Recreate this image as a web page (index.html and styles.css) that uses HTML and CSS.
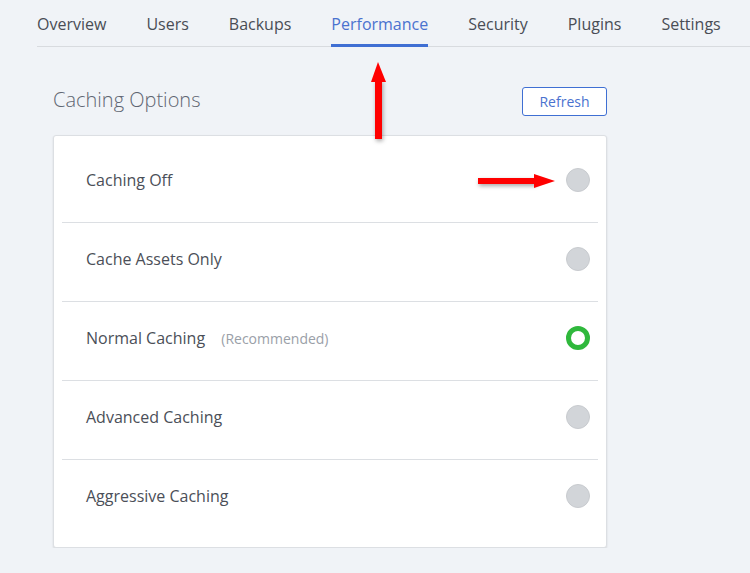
FILE: index.html
```html
<!DOCTYPE html>
<html lang="en">
<head>
    <meta charset="UTF-8">
    <meta name="viewport" content="width=device-width, initial-scale=1.0">
    <title>Performance</title>
    <link rel="stylesheet" href="styles.css">
</head>
<body>

    <nav class="tabs">
        <a class="tab">Overview</a>
        <a class="tab">Users</a>
        <a class="tab">Backups</a>
        <a class="tab active">Performance</a>
        <a class="tab">Security</a>
        <a class="tab">Plugins</a>
        <a class="tab">Settings</a>
    </nav>

    <section class="contenido">

        <div class="cabecera">
            <h2>Caching Options</h2>
            <button class="btnRefresh">Refresh</button>
        </div>

        <div class="tarjeta">
            <div class="opcion">
                <span class="nombre">Caching Off</span>
                <span class="radio"></span>
            </div>
            <div class="opcion">
                <span class="nombre">Cache Assets Only</span>
                <span class="radio"></span>
            </div>
            <div class="opcion">
                <span class="nombre">Normal Caching <small>(Recommended)</small></span>
                <span class="radio marcado"></span>
            </div>
            <div class="opcion">
                <span class="nombre">Advanced Caching</span>
                <span class="radio"></span>
            </div>
            <div class="opcion">
                <span class="nombre">Aggressive Caching</span>
                <span class="radio"></span>
            </div>
        </div>

    </section>

    <!-- flechas de anotacion -->
    <div class="flecha arriba"></div>
    <div class="flecha derecha"></div>

</body>
</html>
```

FILE: styles.css
```css
body{
    margin: 0;
    background-color: #f0f3f7;
    font-family: "Open Sans", "Noto Sans", sans-serif;
    color: #4b4f58;
}

.tabs{
    display: flex;
    gap: 40px;
    margin-left: 37px;
    height: 46px;
    border-bottom: 1px solid #d8dbdf;
}

.tab{
    display: block;
    height: 44px;
    line-height: 48px;
    font-size: 16px;
    color: #494d55;
    border-bottom: 3px solid transparent;
}

.tab.active{
    color: #4a72cf;
    border-bottom-color: #3f6fd3;
}

.contenido{
    width: 554px;
    margin-left: 53px;
}

.cabecera{
    display: flex;
    justify-content: space-between;
    align-items: center;
    margin-top: 40px;
    height: 29px;
    margin-bottom: 19px;
}

.cabecera h2{
    margin: 0;
    font-size: 20px;
    font-weight: 300;
    color: #5f6672;
    position: relative;
    top: -2px;
}

.btnRefresh{
    width: 85px;
    height: 29px;
    background: #ffffff;
    border: 1px solid #3f6fd3;
    border-radius: 3px;
    color: #4a72cf;
    font-family: "Open Sans", sans-serif;
    font-size: 14px;
    padding: 0;
}

.tarjeta{
    background: #ffffff;
    border: 1px solid #dcdfe3;
    border-radius: 3px;
    box-shadow: 0 1px 2px rgba(0, 0, 0, 0.12);
    padding: 8px 8px 9px 8px;
}

.opcion{
    display: flex;
    justify-content: space-between;
    align-items: center;
    padding: 24px 8px 30px 24px;
    border-bottom: 1px solid #dcdfe3;
}

.opcion:last-child{
    border-bottom: none;
}

.nombre{
    font-size: 16px;
    line-height: 22px;
    color: #4b4f58;
}

.nombre small{
    font-size: 14px;
    color: #9aa0a8;
    margin-left: 12px;
}

.radio{
    width: 24px;
    height: 24px;
    box-sizing: border-box;
    border-radius: 50%;
    background: #d2d5d9;
    border: 1px solid #c8cbcf;
}

.radio.marcado{
    background: #ffffff;
    border: 5px solid #2fb83c;
}

/* flechas rojas */
.flecha{
    position: absolute;
    background: #ff0000;
    box-shadow: 1px 2px 4px rgba(0, 0, 0, 0.35);
}

.flecha::after{
    content: "";
    position: absolute;
    width: 0;
    height: 0;
}

.flecha.arriba{
    left: 375px;
    top: 80px;
    width: 7px;
    height: 59px;
}

.flecha.arriba::after{
    left: -4px;
    top: -18px;
    border-left: 7px solid transparent;
    border-right: 8px solid transparent;
    border-bottom: 20px solid #ff0000;
}

.flecha.derecha{
    left: 478px;
    top: 178px;
    width: 58px;
    height: 6px;
}

.flecha.derecha::after{
    left: 56px;
    top: -4px;
    border-top: 7px solid transparent;
    border-bottom: 7px solid transparent;
    border-left: 21px solid #ff0000;
}
```
